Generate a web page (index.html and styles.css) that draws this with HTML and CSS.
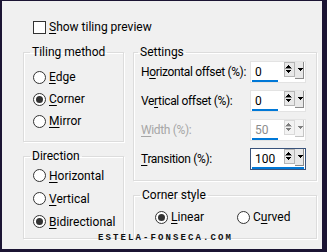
FILE: index.html
```html
<!DOCTYPE html>
<html lang="en">
<head>
    <meta charset="UTF-8">
    <title>Tiling</title>
    <link rel="stylesheet" href="styles.css">
</head>
<body>
    <div class="dialog">
        <label class="check-row">
            <span class="checkbox"></span>
            <span><u>S</u>how tiling preview</span>
        </label>

        <div class="panels">
            <div class="column">
                <fieldset class="group tiling">
                    <legend>Tiling method</legend>
                    <label class="radio"><span class="dot"></span><span><u>E</u>dge</span></label>
                    <label class="radio"><span class="dot checked"></span><span><u>C</u>orner</span></label>
                    <label class="radio"><span class="dot"></span><span><u>M</u>irror</span></label>
                </fieldset>

                <fieldset class="group direction">
                    <legend>Direction</legend>
                    <label class="radio"><span class="dot"></span><span><u>H</u>orizontal</span></label>
                    <label class="radio"><span class="dot"></span><span><u>V</u>ertical</span></label>
                    <label class="radio"><span class="dot checked"></span><span><u>B</u>idirectional</span></label>
                </fieldset>
            </div>

            <div class="column">
                <fieldset class="group settings">
                    <legend>Settings</legend>
                    <div class="field-row">
                        <span class="field-label">H<u>o</u>rizontal offset (%):</span>
                        <div class="spin">
                            <div class="spin-top"><span class="value">0</span><span class="arrows"></span></div>
                            <span class="bar"></span>
                        </div>
                    </div>
                    <div class="field-row">
                        <span class="field-label">Ve<u>r</u>tical offset (%):</span>
                        <div class="spin">
                            <div class="spin-top"><span class="value">0</span><span class="arrows"></span></div>
                            <span class="bar"></span>
                        </div>
                    </div>
                    <div class="field-row disabled">
                        <span class="field-label"><u>W</u>idth (%):</span>
                        <div class="spin">
                            <div class="spin-top"><span class="value">50</span><span class="arrows"></span></div>
                            <span class="bar"></span>
                        </div>
                    </div>
                    <div class="field-row">
                        <span class="field-label"><u>T</u>ransition (%):</span>
                        <div class="spin focused">
                            <div class="spin-top"><span class="value">100</span><span class="arrows"></span></div>
                            <span class="bar full"></span>
                        </div>
                    </div>
                </fieldset>

                <fieldset class="group corner">
                    <legend>Corner style</legend>
                    <div class="radio-line">
                        <label class="radio linear"><span class="dot checked"></span><span><u>L</u>inear</span></label>
                        <label class="radio"><span class="dot"></span><span>C<u>u</u>rved</span></label>
                    </div>
                </fieldset>
            </div>
        </div>

        <div class="watermark">ESTELA-FONSECA.COM</div>
    </div>
</body>
</html>
```

FILE: styles.css
```css
* {
    box-sizing: border-box;
}

body {
    margin: 0;
    background-color: #1b1433;
    font-family: Roboto, 'Liberation Sans', sans-serif;
    font-size: 12px;
    color: #000000;
}

u {
    text-decoration-thickness: 1px;
    text-underline-offset: 2px;
}

.dialog {
    position: relative;
    width: 327px;
    height: 252px;
    border-style: solid;
    border-color: #1b1433;
    border-width: 1px 5px 3px 2px;
    background-color: #f0f0f0;
    padding: 20px 5px 0 21px;
    overflow: hidden;
}

.check-row {
    display: flex;
    align-items: center;
    gap: 3px;
    height: 13px;
    padding-left: 10px;
    line-height: 13px;
    white-space: nowrap;
}

.checkbox {
    width: 13px;
    height: 13px;
    border: 1px solid #333333;
    background-color: #ffffff;
}

.panels {
    display: grid;
    grid-template-columns: 101px 184px;
    column-gap: 9px;
    margin-top: 10px;
}

.column {
    display: flex;
    flex-direction: column;
    gap: 6px;
    min-width: 0;
}

.group {
    margin: 0;
    min-width: 0;
    border: 1px solid #dcdcdc;
    box-shadow: inset 1px 1px 0 #ffffff, 1px 1px 0 #ffffff;
    padding: 0 0 0 9px;
}

.group legend {
    padding: 0 2px;
    margin-left: -3px;
    line-height: 16px;
}

.radio {
    display: flex;
    align-items: center;
    gap: 3px;
    height: 22px;
    white-space: nowrap;
}

.dot {
    position: relative;
    width: 13px;
    height: 13px;
    border: 1px solid #333333;
    border-radius: 50%;
    background-color: #ffffff;
}

.dot.checked::after {
    content: '';
    position: absolute;
    left: 2px;
    top: 2px;
    width: 7px;
    height: 7px;
    border-radius: 50%;
    background-color: #333333;
}

.tiling {
    height: 98px;
    padding-top: 6px;
}

.direction {
    height: 91px;
    padding-top: 0;
}

.direction .radio {
    height: 23px;
}

.settings {
    width: 184px;
    height: 137px;
    padding: 1px 10px 0 7px;
}

.field-row {
    display: flex;
    align-items: center;
    justify-content: space-between;
    height: 22px;
    margin-bottom: 7px;
    white-space: nowrap;
}

.field-label {
    min-width: 0;
    letter-spacing: -0.35px;
}

.field-row.disabled {
    color: #a6a6a6;
}

.spin {
    display: flex;
    flex-direction: column;
    flex-shrink: 0;
    width: 56px;
    height: 22px;
    border: 1px solid #e3e3e3;
    background-color: #ffffff;
}

.spin-top {
    display: flex;
    align-items: flex-start;
    justify-content: space-between;
    height: 18px;
    padding-left: 4px;
}

.value {
    line-height: 18px;
    padding-top: 1px;
}

.disabled .value {
    color: #8c8c8c;
}

.arrows {
    width: 22px;
    height: 18px;
    background:
        linear-gradient(#000, #000) 15px 6px / 5px 1px no-repeat,
        linear-gradient(#000, #000) 16px 7px / 3px 1px no-repeat,
        linear-gradient(#000, #000) 17px 8px / 1px 1px no-repeat,
        linear-gradient(#8a8a8a, #8a8a8a) 20px 0 / 1px 17px no-repeat,
        linear-gradient(#8a8a8a, #8a8a8a) 12px 16px / 9px 1px no-repeat,
        linear-gradient(#e8e8e8, #e8e8e8) 12px 0 / 8px 16px no-repeat;
    position: relative;
}

.arrows::before {
    content: '';
    position: absolute;
    left: 1px;
    top: 0;
    width: 9px;
    height: 13px;
    border: 1px solid #b4b4b4;
    background:
        linear-gradient(#000, #000) 3px 2px / 1px 1px no-repeat,
        linear-gradient(#000, #000) 2px 3px / 3px 1px no-repeat,
        linear-gradient(#000, #000) 1px 4px / 5px 1px no-repeat,
        linear-gradient(#8a8a8a, #8a8a8a) 0 5px / 7px 1px no-repeat,
        linear-gradient(#000, #000) 1px 7px / 5px 1px no-repeat,
        linear-gradient(#000, #000) 2px 8px / 3px 1px no-repeat,
        linear-gradient(#000, #000) 3px 9px / 1px 1px no-repeat,
        #e8e8e8;
}

.disabled .arrows {
    opacity: 0.5;
}

.bar {
    width: 26px;
    height: 2px;
    margin-left: 1px;
    background-color: #0078d7;
}

.spin.focused {
    border-color: #39527a;
}

.bar.full {
    width: 52px;
    height: 3px;
}

.corner {
    height: 52px;
    padding: 3px 0 0 9px;
}

.radio-line {
    display: flex;
    padding-left: 12px;
}

.radio.linear {
    width: 82px;
}

.watermark {
    position: absolute;
    left: 96px;
    top: 233px;
    font-family: 'Liberation Mono', monospace;
    font-weight: bold;
    font-size: 9px;
    line-height: 9px;
    letter-spacing: 2.1px;
    color: #111111;
}
```
